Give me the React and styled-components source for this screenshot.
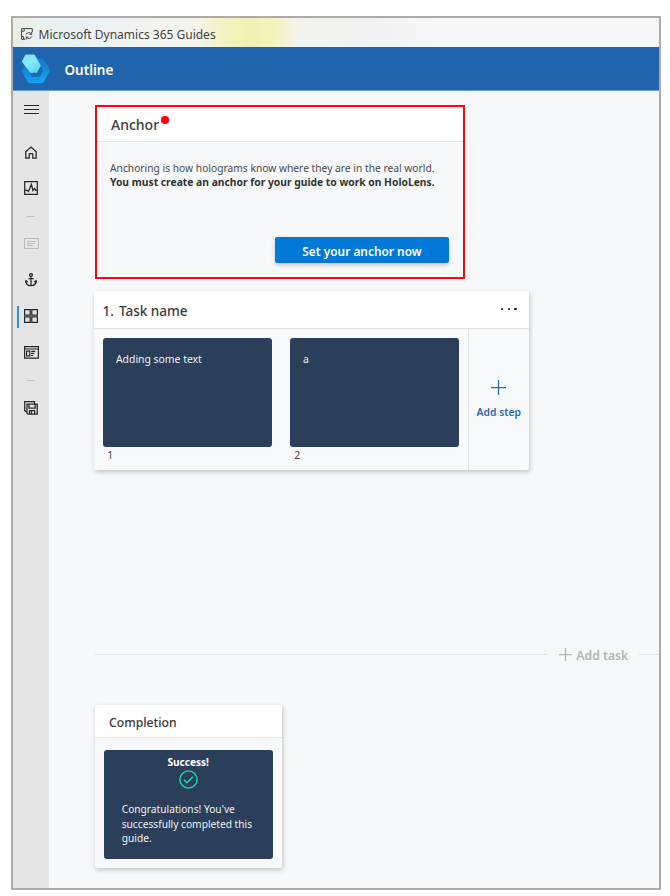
import React from 'react';
import styled, { createGlobalStyle, css } from 'styled-components';

const Global = createGlobalStyle`
  *, *::before, *::after { box-sizing: border-box; }
  body { margin: 0; background: #fff; color: #3a3a3a; font-family: "Noto Sans", "Open Sans", sans-serif; }
  button { font-family: inherit; border: 0; padding: 0; background: none; color: inherit; }
  svg { display: block; flex-shrink: 0; }
`;

const Window = styled.div`
  display: flex;
  flex-direction: column;
  width: 650px;
  height: 874px;
  margin: 16px 0 6px 11px;
  border: 2px solid #aea9a9;
  background: #f6f8fa;
  overflow: hidden;
`;

const TitleBar = styled.div`
  display: flex;
  align-items: center;
  flex: 0 0 29px;
  padding: 3px 0 0 8px;
  gap: 5.5px;
  font-size: 12px;
  color: #444;
  background: linear-gradient(90deg, #e9ede2 0, #ecf1ee 30px, #eaf1f5 70px, #f2f3f1 130px, #f4f4ec 185px, #f3f3c4 205px, #f0f0b4 235px, #f3f3bd 262px, #f3f3ee 285px, #f1f1f1 340px, #f6f6f6 420px);
`;

const Header = styled.header`
  display: flex;
  align-items: center;
  flex: 0 0 44px;
  padding-left: 8px;
  gap: 13.5px;
  background: #2064ad;
  border-bottom: 1px solid #6f9fce;
`;

const PageTitle = styled.h1`
  margin: 2px 0 0;
  font-size: 13.5px;
  line-height: 20px;
  font-weight: 600;
  color: #fff;
`;

const Body = styled.div`
  display: flex;
  flex: 1;
  min-height: 0;
`;

const Sidebar = styled.nav`
  display: flex;
  flex-direction: column;
  flex: 0 0 36px;
  background: #e5e5e5;
`;

const NavItem = styled.button`
  display: flex;
  align-items: center;
  justify-content: center;
  width: 36px;
  height: ${p => p.$h || 36}px;
  margin-bottom: ${p => p.$after || 0}px;
  color: ${p => (p.$muted ? '#bcbcbc' : '#262626')};
  position: relative;
  ${p => p.$active && css`
    &::before {
      content: '';
      position: absolute;
      left: 4px;
      top: 8px;
      width: 2px;
      height: 22px;
      background: #2b8fdc;
    }
  `}
`;

const NavDash = styled.div`
  display: flex;
  align-items: center;
  justify-content: center;
  height: ${p => p.$h}px;
  &::before { content: ''; width: 8px; height: 1px; background: #bdbdbd; }
`;

const Main = styled.main`
  display: flex;
  flex-direction: column;
  flex: 1;
  min-width: 0;
  padding: 14px 0 0 46px;
`;

const AnchorCard = styled.section`
  width: 370px;
  height: 174px;
  border: 2px solid #ff0505;
  box-shadow: 0 1px 0 #f1fbfc;
`;

const AnchorHead = styled.div`
  display: flex;
  align-items: center;
  height: 35px;
  padding: 1px 0 0 14px;
  gap: 2px;
  background: #fff;
  border-bottom: 1px solid #e6e7e8;
  font-size: 14px;
  font-weight: 500;
`;

const RequiredDot = styled.span`
  width: 7.5px;
  height: 7.5px;
  margin-bottom: 9px;
  border-radius: 50%;
  background: #fb0404;
`;

const AnchorBody = styled.div`
  display: flex;
  flex-direction: column;
  padding: 18.5px 14px 0 13px;
`;

const AnchorText = styled.p`
  margin: 0;
  font-size: 10.25px;
  line-height: 14.5px;
  color: #4a4a4a;
  white-space: nowrap;
  strong { display: block; font-size: 10.3px; font-weight: 700; color: #333; }
`;

const PrimaryButton = styled.button`
  && {
    align-self: flex-end;
    width: 174px;
    height: 26px;
    margin-top: 47.5px;
    padding-top: 2px;
    border-radius: 2px;
    background: #0278d7;
    box-shadow: 0 2px 4px rgba(0, 0, 0, 0.22);
    color: #fff;
    font-size: 11.9px;
    font-weight: 600;
    line-height: 20px;
  }
`;

const Card = styled.section`
  width: ${p => p.$w}px;
  height: ${p => p.$h}px;
  border-radius: 2px;
  background: #f7f9fb;
  box-shadow: 1px 2px 5px rgba(0, 0, 0, 0.22);
  overflow: hidden;
`;

const TaskCard = styled(Card)`
  flex-shrink: 0;
  display: flex;
  flex-direction: column;
  margin: 12px 0 0 -1px;
`;

const TaskHead = styled.div`
  display: flex;
  align-items: center;
  flex: 0 0 38px;
  padding: 3px 12px 0 8.5px;
  gap: 5px;
  background: #fff;
  border-bottom: 1px solid #e4e5e6;
  font-size: 13.5px;
  font-weight: 500;
`;

const More = styled.button`
  display: flex;
  gap: 4.2px;
  margin: 0 0 4px auto;
  i { width: 2.6px; height: 2.6px; border-radius: 50%; background: #111; }
`;

const TaskBody = styled.div`
  display: flex;
  flex: 1;
`;

const Steps = styled.div`
  display: flex;
  flex: 0 0 374.5px;
  gap: 18px;
  padding: 8.5px 0 0 8.7px;
  border-right: 1.5px solid #e4e6e8;
`;

const Step = styled.figure`
  width: 169px;
  margin: 0;
  figcaption { padding-left: 4.5px; font-size: 10.4px; line-height: 17px; color: #444; }
`;

const Slide = styled.div`
  width: 169px;
  height: 109px;
  border-radius: 3px;
  background: #2b3f5a;
  color: #eef1f4;
  font-size: 10.4px;
  line-height: 15px;
  padding: 14px 0 0 13.3px;
`;

const AddStep = styled.button`
  display: flex;
  flex: 1;
  flex-direction: column;
  align-items: center;
  justify-content: flex-start;
  && { padding-top: 51px; }
  gap: 9px;
  color: #2a69b3;
  font-size: 10.4px;
  line-height: 16px;
  font-weight: 600;
`;

const AddTaskRow = styled.div`
  display: flex;
  align-items: center;
  height: 20px;
  margin-top: 174px;
  flex-shrink: 0;
`;

const Rule = styled.span`
  width: ${p => p.$w}px;
  height: 1px;
  background: #e2e4e6;
`;

const AddTask = styled.button`
  display: flex;
  align-items: center;
  width: 92px;
  && { padding-left: 12px; }
  gap: 4px;
  color: #b3b3b3;
  font-size: 12.2px;
  line-height: 18px;
  font-weight: 600;
  white-space: nowrap;
  span { margin-top: 3px; }
`;

const CompletionCard = styled(Card)`
  flex-shrink: 0;
  margin-top: 41px;
`;

const CompletionHead = styled.div`
  display: flex;
  align-items: center;
  height: 33px;
  padding: 2px 0 0 14px;
  background: #fff;
  border-bottom: 1px solid #e4e5e6;
  font-size: 12.2px;
  font-weight: 500;
`;

const SuccessSlide = styled(Slide)`
  display: flex;
  flex-direction: column;
  align-items: center;
  margin: 11.5px 0 0 8.7px;
  padding: 5px 0 0;
  strong { font-size: 10.1px; font-weight: 700; color: #fff; }
  p { align-self: stretch; margin: 13.5px 0 0 18px; font-size: 10.2px; line-height: 14.6px; white-space: nowrap; }
`;

const Icon = ({ w = 16, h = w, sw = 1.25, children }) => (
  <svg width={w} height={h} viewBox={`0 0 ${w} ${h}`} fill="none" stroke="currentColor" strokeWidth={sw}>
    {children}
  </svg>
);

const AppIcon = () => (
  <Icon w={12} h={12} sw={1}>
    <path d="M4.2 11.3H.6V.6h10.7v3.6M.6 3.2h2.6V.8M.8 8.6h1.8v2.5M4.8 6.6A3.2 3.2 0 0 1 10.4 6M10.7 4v2.4H8.4M11 8.3a3.2 3.2 0 0 1-5.6.9M5.2 11.4V9h2.2" />
  </Icon>
);

const Logo = () => (
  <svg width="30" height="30" viewBox="0 0 30 30">
    <defs>
      <linearGradient id="ring" x1="0.2" y1="0" x2="0.4" y2="1">
        <stop offset="0" stopColor="#1479cc" />
        <stop offset="0.5" stopColor="#1787d6" />
        <stop offset="1" stopColor="#12a4f2" />
      </linearGradient>
      <linearGradient id="pill" x1="0" y1="0" x2="0.7" y2="1">
        <stop offset="0" stopColor="#76e4f6" />
        <stop offset="0.5" stopColor="#86ecfa" />
        <stop offset="1" stopColor="#58d4f6" />
      </linearGradient>
    </defs>
    <path d="M14 4.5h7.5q.8 0 1.2.7L29 16.6 22.5 28.3q-.4.7-1.2.7H8.2q-.8 0-1.2-.7L.5 17 4 10.5z" fill="url(#ring)" />
    <path d="M14 11h5l3.2 5.8-3.4 6h-8L9 19.5z" fill="#1b69b6" />
    <path d="M1.2 7 4 1.2Q4.4.5 5.3.5h7.2q.9 0 1.4.8l5.5 9.4q.5.8.1 1.6l-3.4 6.3q-.7 1-1.7 0L10.8 19Q9.8 19.4 9.2 18.5L1.4 8.5Q.8 7.8 1.2 7z" fill="url(#pill)" />
  </svg>
);

export default function App() {
  return (
    <>
      <Global />
      <Window>
        <TitleBar><AppIcon />Microsoft Dynamics 365 Guides</TitleBar>
        <Header><Logo /><PageTitle>Outline</PageTitle></Header>
        <Body>
          <Sidebar>
            <NavItem $after={7} aria-label="Menu">
              <Icon w={15} h={10} sw={1.1}><path d="M0 1.5h15M0 5.5h15M0 9.5h15" /></Icon>
            </NavItem>
            <NavItem aria-label="Home">
              <Icon w={12} h={13}><path d="M.8 12.2V5.8L6 1l5.2 4.8v6.4H7.8V8.4q0-.7-.7-.7H4.9q-.7 0-.7.7v3.8z" /></Icon>
            </NavItem>
            <NavItem $h={36} aria-label="Analyze">
              <Icon w={14} h={14}><path d="M.7.7h12.6v12.6H.7zM.7 9.3h2.5l1.2 1.2 3-7 1.6 6 1.6-2.2 1.2 2h1.5" /></Icon>
            </NavItem>
            <NavDash $h={20} />
            <NavItem $h={35} $muted aria-label="Notes">
              <Icon w={15} h={11} sw={1}><path d="M.5.5h14v10H.5zM3 3.5h9M3 5.5h8M3 7.5h6" /></Icon>
            </NavItem>
            <NavItem $h={37} aria-label="Anchor">
              <Icon w={12} h={14}>
                <circle cx="6" cy="2" r="1.4" />
                <path d="M6 3.4v9.3M3.5 5.6h5M.8 7.8c0 2.8 2 4.9 5.2 4.9s5.2-2.1 5.2-4.9M.2 9.6l.8-1.9L2.8 9M11.8 9.6 11 7.7 9.2 9" />
              </Icon>
            </NavItem>
            <NavItem $active $h={36} aria-label="Outline">
              <Icon w={14} h={14}><path d="M.6.6h5.6v5.6H.6zM7.8.6h5.6v5.6H7.8zM.6 7.8h5.6v5.6H.6zM7.8 7.8h5.6v5.6H7.8z" /></Icon>
            </NavItem>
            <NavItem $h={36} aria-label="Step editor">
              <Icon w={15} h={13} sw={1.2}><path d="M.6.6h13.8v11.6H.6zM.6 3h13.8M2.6 5.2h3.2v4.6H2.6zM7.2 5.4h4M7.2 7.4h3M7.2 9.5h2" /></Icon>
            </NavItem>
            <NavDash $h={20} />
            <NavItem aria-label="Save">
              <Icon w={14} h={14}><path d="M3 10.6H1.8L.7 9.5V.7h9.8v2M3 3h10.2v10.2H4.2L3 12zM5 3.2v4h6.2v-4M5.6 13V9.6h5V13M7.5 10.5V13" /></Icon>
            </NavItem>
          </Sidebar>
          <Main>
            <AnchorCard>
              <AnchorHead>Anchor<RequiredDot /></AnchorHead>
              <AnchorBody>
                <AnchorText>
                  Anchoring is how holograms know where they are in the real world.
                  <strong>You must create an anchor for your guide to work on HoloLens.</strong>
                </AnchorText>
                <PrimaryButton>Set your anchor now</PrimaryButton>
              </AnchorBody>
            </AnchorCard>
            <TaskCard $w={435} $h={179}>
              <TaskHead>
                <span>1.</span><span>Task name</span>
                <More aria-label="More options"><i /><i /><i /></More>
              </TaskHead>
              <TaskBody>
                <Steps>
                  <Step><Slide>Adding some text</Slide><figcaption>1</figcaption></Step>
                  <Step><Slide>a</Slide><figcaption>2</figcaption></Step>
                </Steps>
                <AddStep>
                  <Icon w={15} h={15}><path d="M7.5 0v15M0 7.5h15" /></Icon>
                  Add step
                </AddStep>
              </TaskBody>
            </TaskCard>
            <AddTaskRow>
              <Rule $w={454} />
              <AddTask>
                <Icon w={13} h={13}><path d="M6.5 0v13M0 6.5h13" /></Icon>
                <span>Add task</span>
              </AddTask>
              <Rule $w={20} />
            </AddTaskRow>
            <CompletionCard $w={187} $h={163}>
              <CompletionHead>Completion</CompletionHead>
              <SuccessSlide>
                <strong>Success!</strong>
                <Icon w={19} h={19} sw={1.4}>
                  <circle cx="9.5" cy="9.5" r="8.6" stroke="#14dcb4" />
                  <path d="m5 9.8 2.9 2.9 6-6" stroke="#14dcb4" />
                </Icon>
                <p>Congratulations! You've<br />successfully completed this<br />guide.</p>
              </SuccessSlide>
            </CompletionCard>
          </Main>
        </Body>
      </Window>
    </>
  );
}
